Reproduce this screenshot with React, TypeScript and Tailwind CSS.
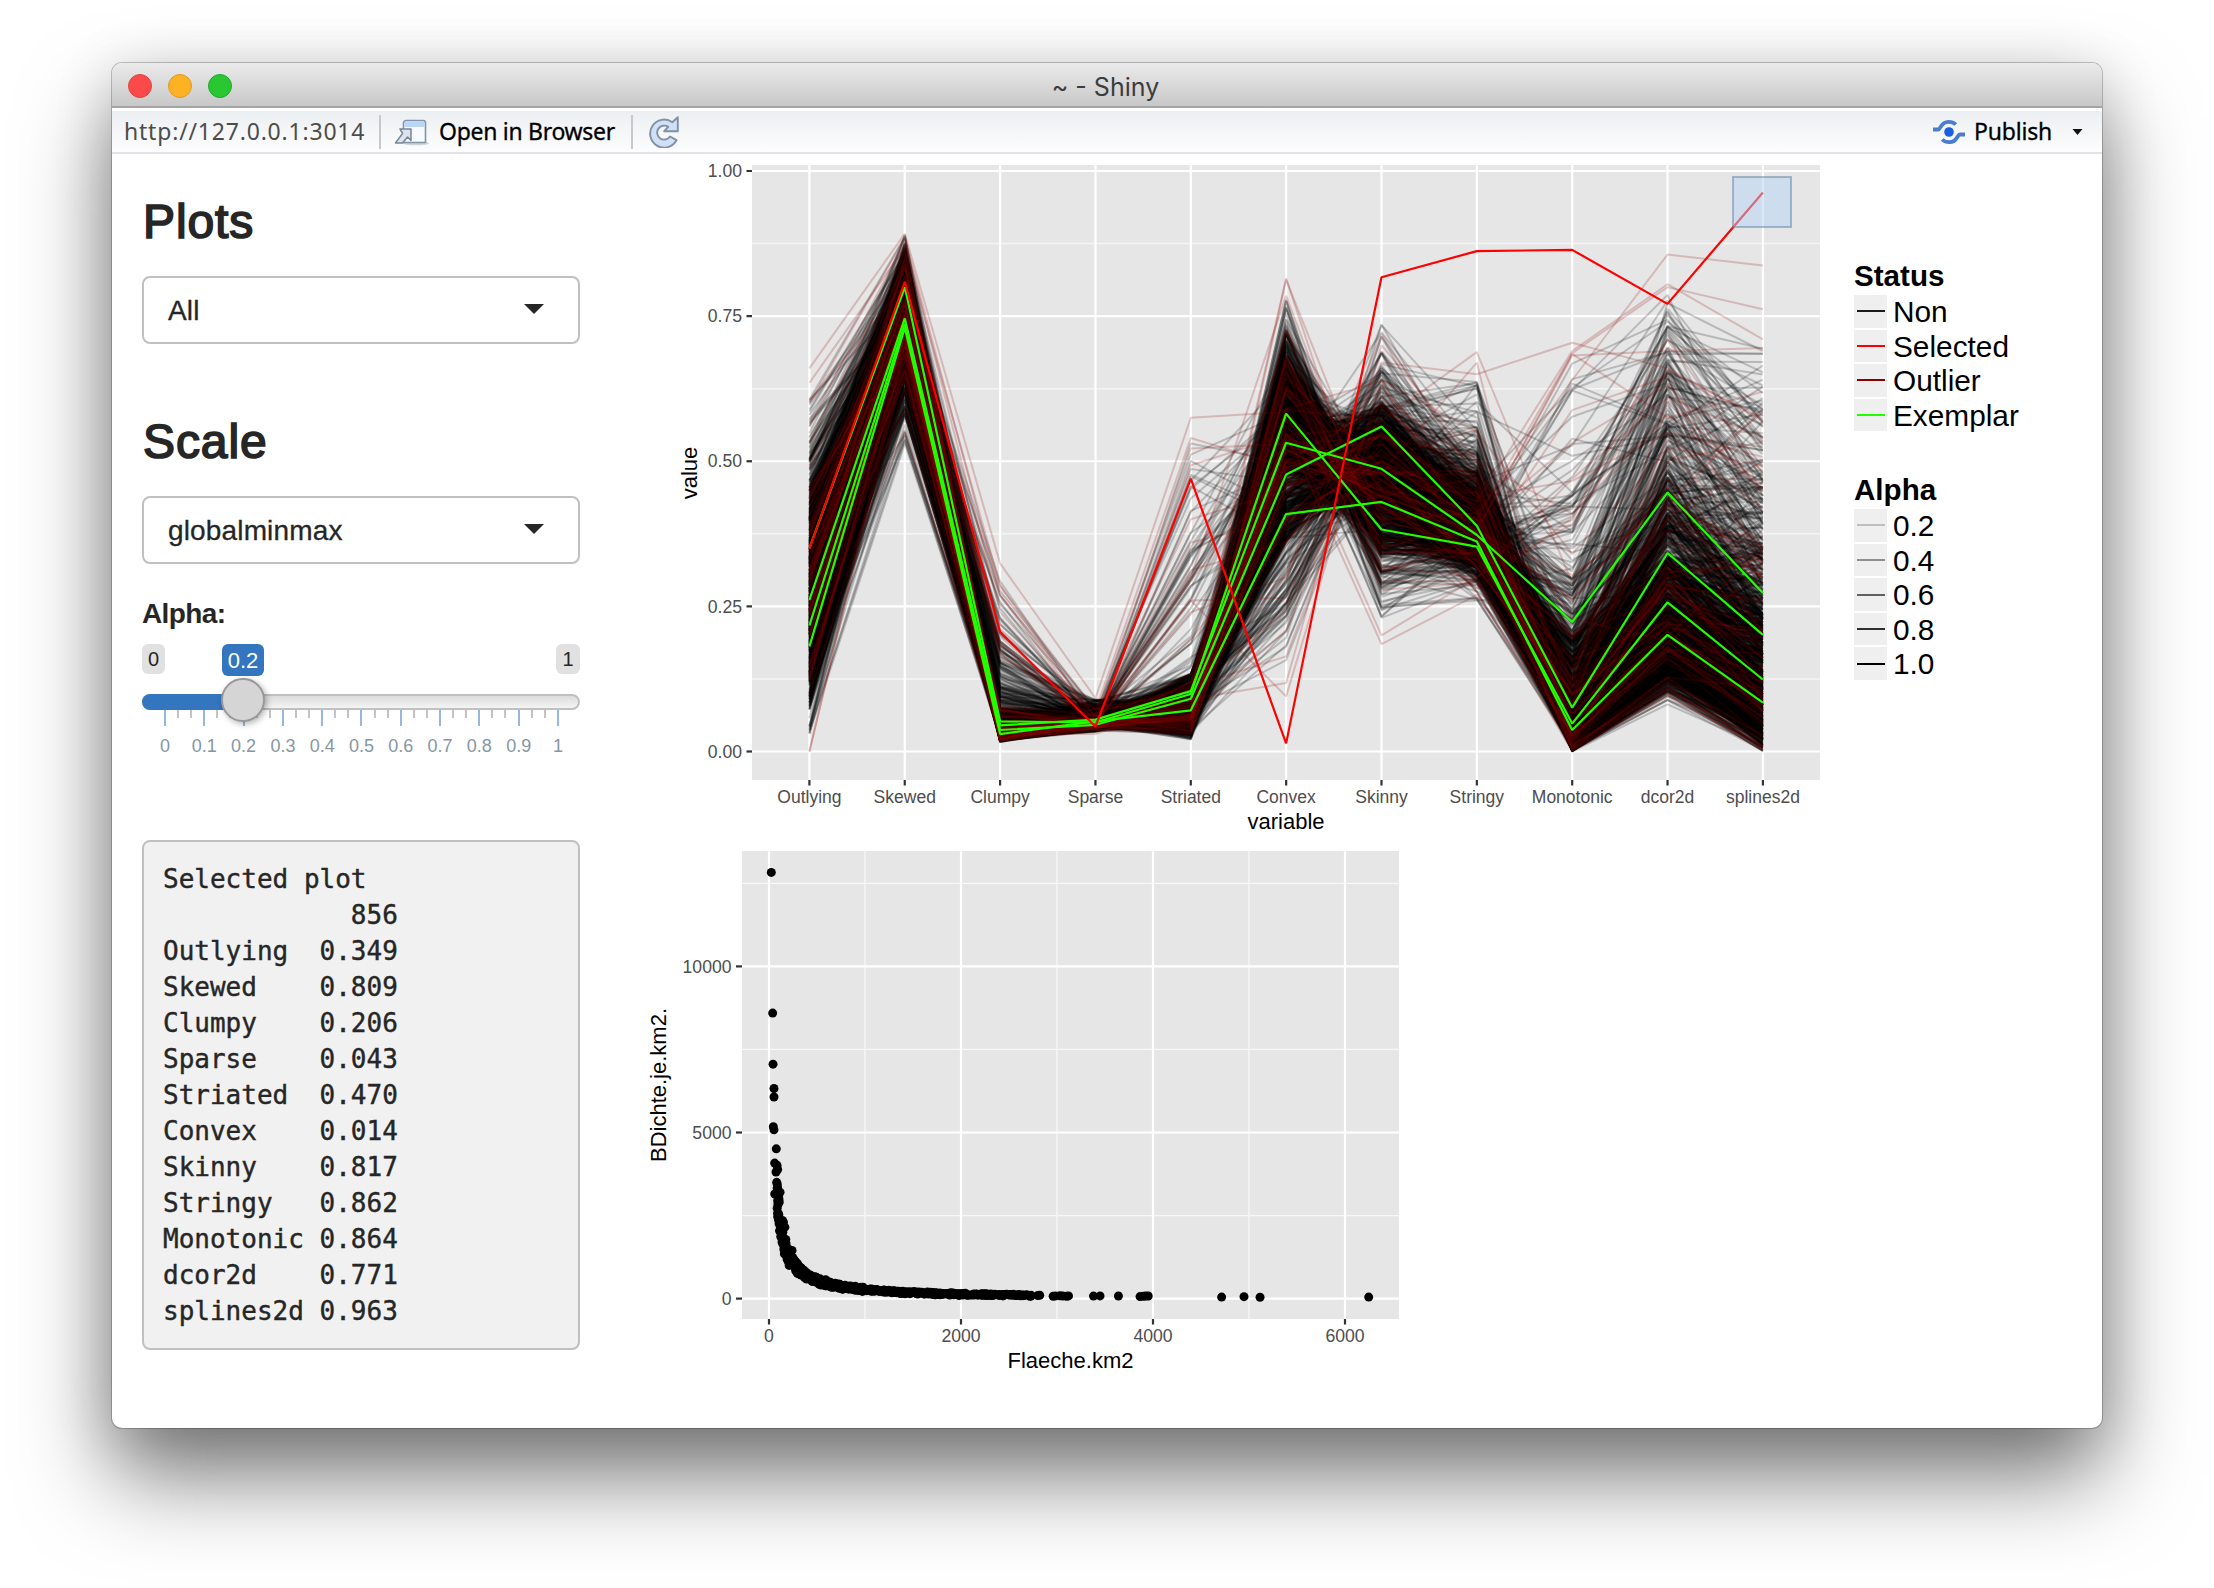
import React from "react";

/* ---------- deterministic sampling ---------- */

function makeRandom(seed: number) {
  let a = seed;
  return () => {
    a = (a + 0x6d2b79f5) | 0;
    let t = Math.imul(a ^ (a >>> 15), 1 | a);
    t = (t + Math.imul(t ^ (t >>> 7), 61 | t)) ^ t;
    return ((t ^ (t >>> 14)) >>> 0) / 4294967296;
  };
}

function normalCdf(z: number) {
  const t = 1 / (1 + 0.2316419 * Math.abs(z));
  const d = 0.3989423 * Math.exp((-z * z) / 2);
  const p = d * t * (0.3193815 + t * (-0.3565638 + t * (1.781478 + t * (-1.821256 + t * 1.330274))));
  return z > 0 ? 1 - p : p;
}

const VARIABLES = [
  "Outlying", "Skewed", "Clumpy", "Sparse", "Striated", "Convex",
  "Skinny", "Stringy", "Monotonic", "dcor2d", "splines2d",
];

const SELECTED = [0.349, 0.809, 0.206, 0.043, 0.47, 0.014, 0.817, 0.862, 0.864, 0.771, 0.963];

const EXEMPLARS = [
  [0.35, 0.8, 0.052, 0.05, 0.099, 0.582, 0.3825, 0.353, 0.048, 0.257, 0.124],
  [0.261, 0.746, 0.045, 0.055, 0.104, 0.532, 0.487, 0.373, 0.223, 0.446, 0.273],
  [0.217, 0.737, 0.037, 0.046, 0.091, 0.477, 0.56, 0.389, 0.0755, 0.342, 0.201],
  [0.181, 0.73, 0.03, 0.052, 0.071, 0.409, 0.43, 0.362, 0.037, 0.201, 0.084],
];

const PROBS = [0, 0.01, 0.05, 0.25, 0.5, 0.75, 0.9, 0.96, 0.99, 1];
const QUANTILES = [
  [0.03, 0.07, 0.12, 0.2, 0.27, 0.35, 0.42, 0.47, 0.53, 0.61],
  [0.53, 0.58, 0.64, 0.7, 0.74, 0.78, 0.82, 0.845, 0.87, 0.89],
  [0.016, 0.018, 0.02, 0.026, 0.034, 0.048, 0.075, 0.115, 0.19, 0.3],
  [0.034, 0.037, 0.04, 0.045, 0.05, 0.056, 0.066, 0.075, 0.083, 0.09],
  [0.02, 0.027, 0.035, 0.055, 0.075, 0.095, 0.115, 0.135, 0.36, 0.54],
  [0.15, 0.24, 0.36, 0.48, 0.54, 0.6, 0.65, 0.685, 0.73, 0.78],
  [0.22, 0.28, 0.34, 0.415, 0.465, 0.52, 0.57, 0.605, 0.66, 0.74],
  [0.26, 0.29, 0.315, 0.35, 0.38, 0.42, 0.455, 0.49, 0.56, 0.65],
  [0, 0.001, 0.003, 0.018, 0.05, 0.11, 0.2, 0.3, 0.48, 0.67],
  [0.08, 0.1, 0.12, 0.17, 0.24, 0.34, 0.47, 0.57, 0.7, 0.79],
  [0, 0.005, 0.02, 0.07, 0.14, 0.24, 0.36, 0.47, 0.6, 0.7],
];

function quantile(table: number[], p: number) {
  for (let i = 1; i < PROBS.length; i++) {
    if (p <= PROBS[i]) {
      const f = (p - PROBS[i - 1]) / (PROBS[i] - PROBS[i - 1]);
      return table[i - 1] + f * (table[i] - table[i - 1]);
    }
  }
  return table[table.length - 1];
}

function sampleProfiles(count: number, seed: number, spread: number) {
  const rnd = makeRandom(seed);
  const gauss = () => Math.sqrt(-2 * Math.log(rnd() + 1e-9)) * Math.cos(2 * Math.PI * rnd());
  const mix = (z: number, rho: number) => rho * z + Math.sqrt(1 - rho * rho) * gauss();
  const rows: number[][] = [];
  for (let i = 0; i < count; i++) {
    const z: number[] = [];
    z[0] = gauss();
    z[1] = mix(z[0], 0.55);
    z[2] = mix(z[1], 0.1);
    z[3] = mix(z[2], 0.3);
    z[4] = gauss();
    z[5] = gauss();
    z[6] = mix(z[5], -0.65);
    z[7] = mix(z[6], 0.5);
    z[8] = gauss();
    z[9] = mix(z[8], 0.85);
    z[10] = mix(z[9], 0.82);
    rows.push(z.map((v, j) => quantile(QUANTILES[j], normalCdf(v * spread))));
  }
  return rows;
}

const NON = sampleProfiles(1450, 41, 1);
const OUTLIERS = sampleProfiles(44, 977, 1.05).concat([
  [0.66, 0.892, 0.324, 0.092, 0.575, 0.585, 0.42, 0.37, 0.09, 0.3, 0.16],
  [0.635, 0.868, 0.285, 0.07, 0.54, 0.49, 0.51, 0.41, 0.02, 0.22, 0.07],
  [0.6, 0.885, 0.27, 0.06, 0.522, 0.53, 0.45, 0.4, 0.11, 0.38, 0.2],
  [0.56, 0.88, 0.24, 0.06, 0.4, 0.45, 0.55, 0.42, 0.05, 0.2, 0.1],
  [0.53, 0.86, 0.05, 0.05, 0.36, 0.4, 0.5, 0.4, 0.14, 0.4, 0.3],
  [0.49, 0.84, 0.06, 0.05, 0.26, 0.265, 0.6, 0.45, 0.01, 0.18, 0.05],
  [0, 0.68, 0.07, 0.05, 0.26, 0.095, 0.64, 0.55, 0.34, 0.52, 0.35],
  [0.0, 0.7, 0.03, 0.03, 0.09, 0.118, 0.7, 0.5, 0.41, 0.58, 0.46],
  [0.3, 0.75, 0.03, 0.04, 0.1, 0.815, 0.32, 0.3, 0.47, 0.61, 0.54],
  [0.27, 0.73, 0.04, 0.05, 0.08, 0.813, 0.4, 0.35, 0.2, 0.4, 0.35],
  [0.33, 0.77, 0.05, 0.05, 0.3, 0.785, 0.35, 0.33, 0.06, 0.25, 0.1],
  [0.28, 0.7, 0.04, 0.05, 0.24, 0.3, 0.67, 0.65, 0.704, 0.66, 0.57],
  [0.2, 0.73, 0.03, 0.05, 0.07, 0.4, 0.57, 0.688, 0.29, 0.47, 0.3],
  [0.22, 0.71, 0.03, 0.05, 0.06, 0.5, 0.48, 0.67, 0.02, 0.2, 0.08],
  [0.25, 0.75, 0.03, 0.05, 0.07, 0.55, 0.185, 0.27, 0.03, 0.16, 0.06],
  [0.26, 0.76, 0.04, 0.05, 0.06, 0.57, 0.2, 0.3, 0.05, 0.18, 0.07],
  [0.3, 0.78, 0.03, 0.05, 0.08, 0.5, 0.4, 0.41, 0.64, 0.856, 0.837],
  [0.29, 0.75, 0.04, 0.05, 0.07, 0.44, 0.5, 0.43, 0.69, 0.805, 0.71],
  [0.18, 0.72, 0.03, 0.05, 0.09, 0.5, 0.45, 0.4, 0.686, 0.8, 0.762],
  [0.2, 0.73, 0.03, 0.05, 0.09, 0.52, 0.44, 0.38, 0.682, 0.69, 0.695],
  [0.2, 0.73, 0.03, 0.05, 0.09, 0.52, 0.44, 0.38, 0.685, 0.575, 0.62],
]);

/* ---------- parallel coordinates chart ---------- */

const px = (i: number) => 149.4 + i * 95.35;
const py = (v: number) => 598.5 - v * 580.5;
const toPoints = (row: number[]) => row.map((v, i) => `${px(i).toFixed(1)},${py(v).toFixed(1)}`).join(" ");

function ParallelChart() {
  return (
    <svg width="1180" height="684" viewBox="0 0 1180 684" className="block shrink-0 font-['Liberation_Sans',Arial,sans-serif]">
      <rect x="92" y="12" width="1068" height="615" fill="#e6e6e6" />
      {[0.125, 0.375, 0.625, 0.875].map((v) => (
        <line key={v} x1="92" x2="1160" y1={py(v)} y2={py(v)} stroke="#f5f5f5" strokeWidth="1.4" />
      ))}
      {[0, 0.25, 0.5, 0.75, 1].map((v) => (
        <g key={v}>
          <line x1="92" x2="1160" y1={py(v)} y2={py(v)} stroke="#ffffff" strokeWidth="2.2" />
          <line x1="86.500" x2="92" y1={py(v)} y2={py(v)} stroke="#333333" strokeWidth="2.2" />
          <text x="82" y={py(v) + 6.2} textAnchor="end" fontSize="17.6" fill="#4d4d4d">{v.toFixed(2)}</text>
        </g>
      ))}
      {VARIABLES.map((name, i) => (
        <g key={name}>
          <line x1={px(i)} x2={px(i)} y1="12" y2="627" stroke="#ffffff" strokeWidth="2.2" />
          <line x1={px(i)} x2={px(i)} y1="627" y2="632.500" stroke="#333333" strokeWidth="2.2" />
          <text x={px(i)} y="649.500" textAnchor="middle" fontSize="17.5" fill="#4d4d4d">{name}</text>
        </g>
      ))}
      <g fill="none" strokeWidth="2" strokeLinejoin="bevel">
        {NON.map((row, i) => (
          <polyline key={i} points={toPoints(row)} stroke={i > 1200 && i % 9 === 0 ? "#8b0000" : "#000000"} strokeOpacity="0.2" />
        ))}
        {OUTLIERS.map((row, i) => (
          <polyline key={i} points={toPoints(row)} stroke="#8b0000" strokeOpacity="0.2" />
        ))}
        {EXEMPLARS.map((row, i) => (
          <polyline key={i} points={toPoints(row)} stroke="#1fff00" strokeWidth="2.200" />
        ))}
        <polyline points={toPoints(SELECTED)} stroke="#ff0000" strokeWidth="2.200" />
      </g>
      <rect x="1073" y="24" width="58" height="50" fill="#b4d4f5" fillOpacity="0.5" stroke="#5f7f9f" strokeOpacity="0.5" strokeWidth="2" />
      <text x="626" y="676" textAnchor="middle" fontSize="22" fill="#000000">variable</text>
      <text transform="translate(37 320) rotate(-90)" textAnchor="middle" fontSize="22" fill="#000000">value</text>
    </svg>
  );
}

/* ---------- scatter chart ---------- */

const SCATTER: [number, number][] = (() => {
  const pts: [number, number][] = [
    [24, 12830], [38, 8595], [42, 7057], [52, 6326], [52, 6068], [45, 5176], [52, 5080], [76, 4509],
    [59, 4079], [83, 4015], [90, 3886], [73, 3810], [80, 3500], [88, 3350], [60, 3150], [115, 3200],
    [95, 3050], [85, 2720], [240, 1450], [3380, 75], [3448, 82], [3640, 78], [3865, 60], [3900, 68],
    [3925, 75], [3950, 78], [4715, 45], [4948, 58], [5115, 40], [6247, 45],
    [2960, 70], [2985, 82], [3030, 85], [3060, 75], [3100, 70], [3120, 80],
    [900, 370], [980, 345], [720, 440], [590, 570], [530, 600], [430, 710], [2820, 100], [2800, 95],
    [150, 2300], [165, 2150], [140, 2350], [105, 2250], [112, 2050], [160, 1350], [210, 1000],
  ];
  const rnd = makeRandom(7);
  for (let i = 0; i < 440; i++) {
    const x = 85 * Math.pow(2780 / 85, Math.pow(rnd(), 0.8));
    pts.push([x, (268000 / x) * (0.84 + rnd() * 0.32) + (rnd() - 0.5) * 40]);
  }
  for (let x = 700; x < 2640; x += 24) {
    pts.push([x, 265000 / x + (rnd() - 0.5) * 50]);
  }
  return pts;
})();

const sx = (v: number) => 129 + v * 0.096;
const sy = (v: number) => 461.6 - v * 0.03322;

function ScatterChart() {
  return (
    <svg width="780" height="540" viewBox="0 0 780 540" className="block shrink-0 font-['Liberation_Sans',Arial,sans-serif]">
      <rect x="102" y="14" width="657" height="468" fill="#e6e6e6" />
      {[2500, 7500, 12500].map((v) => (
        <line key={v} x1="102" x2="759" y1={sy(v)} y2={sy(v)} stroke="#f8f8f8" strokeWidth="1.2" />
      ))}
      {[1000, 3000, 5000].map((v) => (
        <line key={v} x1={sx(v)} x2={sx(v)} y1="14" y2="482" stroke="#f5f5f5" strokeWidth="1.4" />
      ))}
      {[0, 5000, 10000].map((v) => (
        <g key={v}>
          <line x1="102" x2="759" y1={sy(v)} y2={sy(v)} stroke="#ffffff" strokeWidth="2.2" />
          <line x1="96" x2="102" y1={sy(v)} y2={sy(v)} stroke="#333333" strokeWidth="2.2" />
          <text x="91.500" y={sy(v) + 6.2} textAnchor="end" fontSize="17.6" fill="#4d4d4d">{v}</text>
        </g>
      ))}
      {[0, 2000, 4000, 6000].map((v) => (
        <g key={v}>
          <line x1={sx(v)} x2={sx(v)} y1="14" y2="482" stroke="#ffffff" strokeWidth="2.2" />
          <line x1={sx(v)} x2={sx(v)} y1="482" y2="487.500" stroke="#333333" strokeWidth="2.2" />
          <text x={sx(v)} y="505" textAnchor="middle" fontSize="17.6" fill="#4d4d4d">{v}</text>
        </g>
      ))}
      {SCATTER.map(([x, y], i) => (
        <circle key={i} cx={sx(x)} cy={sy(y)} r="4.5" fill="#000000" />
      ))}
      <text x="430.500" y="531" textAnchor="middle" fontSize="22" fill="#000000">Flaeche.km2</text>
      <text transform="translate(26 248) rotate(-90)" textAnchor="middle" fontSize="22" fill="#000000">BDichte.je.km2.</text>
    </svg>
  );
}

/* ---------- legend ---------- */

function Legend({ title, items }: { title: string; items: { label: string; color: string; opacity: number }[] }) {
  return (
    <div>
      <div className="h-[34px] text-[29.6px] leading-[34px] font-bold text-black">{title}</div>
      <div className="mt-[2px]">
        {items.map((it) => (
          <div key={it.label} className="flex h-[34.560px] items-start gap-[6px]">
            <div className="flex h-[32.5px] w-[33px] items-center justify-center bg-[#efefef]">
              <div className="h-[2px] w-[28px]" style={{ backgroundColor: it.color, opacity: it.opacity }} />
            </div>
            <div className="text-[29.8px] leading-[33.5px] text-black">{it.label}</div>
          </div>
        ))}
      </div>
    </div>
  );
}

/* ---------- icons ---------- */

function OpenBrowserIcon() {
  return (
    <svg width="36" height="30" viewBox="0 0 36 30" className="block">
      <ellipse cx="22" cy="26.500" rx="13" ry="1.800" fill="#9aa3ad" opacity="0.45" />
      <path d="M9.500 25.500V6.500Q9.500 3.500 12.500 3.500H29Q31.500 3.500 31.500 6V25.500Z" fill="#f7fafe" stroke="#8494a8" strokeWidth="1.600" />
      <path d="M10.300 10V6.500Q10.300 4.300 12.500 4.300H28.500Q30.700 4.300 30.700 6.500V10Z" fill="#b9d6f5" />
      <path d="M6 12H17V23.500L13.600 20L8.500 26H1.500L8.600 16.400Z" fill="#dde3eb" stroke="#76859a" strokeWidth="1.500" strokeLinejoin="round" />
    </svg>
  );
}

function RefreshIcon() {
  return (
    <svg width="32" height="32" viewBox="0 0 32 32" className="block">
      <path
        d="M24.300 6.200L29.800 1.200V15.200H16.200L20.200 10.900A7 7 0 1 0 22 20.500L28.500 24.200A14 14 0 1 1 24.300 6.200Z"
        fill="#d0e1f6"
        stroke="#8190a7"
        strokeWidth="1.900"
        strokeLinejoin="round"
      />
    </svg>
  );
}

function PublishIcon() {
  return (
    <svg width="34" height="26" viewBox="0 0 34 26" className="block">
      <circle cx="17" cy="13" r="4.800" fill="#1a5fe0" />
      <path d="M1 10.500H6C9 10.500 8.500 2.800 16.500 2.800Q21 2.800 23.800 5.500" fill="none" stroke="#4a7cd0" strokeWidth="3.800" />
      <path d="M33 15.500H28C25 15.500 25.500 23.200 17.500 23.200Q13 23.200 10.200 20.500" fill="none" stroke="#4a7cd0" strokeWidth="3.800" />
    </svg>
  );
}

/* ---------- sidebar ---------- */

function Heading({ children }: { children: React.ReactNode }) {
  return (
    <h3 className="h-[54px] pt-[1px] pl-[1px] text-[48px] leading-[54px] tracking-[0.9px] text-[#262626] [-webkit-text-stroke:1.7px_#262626]">{children}</h3>
  );
}

function Select({ value }: { value: string }) {
  return (
    <div className="flex h-[68px] w-full items-center justify-between rounded-[8px] border-2 border-[#c0c0c0] bg-white pr-[34px] pl-[24px] text-[28px] text-[#262626]">
      <span className="pt-[1px] tracking-[0.15px] [-webkit-text-stroke:0.3px_#262626]">{value}</span>
      <svg width="20" height="10" viewBox="0 0 20 10" className="mb-[3px] block">
        <path d="M0 0H20L10 10Z" fill="#262626" />
      </svg>
    </div>
  );
}

function AlphaSlider() {
  const ticks = Array.from({ length: 31 }, (_, i) => i);
  const labels = ["0", "0.1", "0.2", "0.3", "0.4", "0.5", "0.6", "0.7", "0.8", "0.9", "1"];
  return (
    <div className="relative w-full">
      <div className="flex h-[32px] items-start justify-between text-[20px] text-[#262626]">
        <span className="flex h-[30px] w-[23px] items-center justify-center rounded-[6px] bg-[#e1e1e1]">0</span>
        <span className="flex h-[30px] w-[24px] items-center justify-center rounded-[6px] bg-[#e1e1e1]">1</span>
      </div>
      <span className="absolute top-0 left-[80px] flex h-[32px] w-[42px] items-center justify-center rounded-[6px] bg-[#3475bf] text-[22px] text-white">0.2</span>
      <div className="mt-[18px] flex h-[16px] w-full items-center rounded-full border-2 border-[#c0c0c0] bg-gradient-to-b from-[#dcdcdc] to-[#f4f4f4]">
        <div className="-ml-[2px] h-[16px] w-[103px] shrink-0 rounded-l-full bg-[#3475bf]" />
      </div>
      <div className="ml-[22px] flex h-[16px] w-[395px] items-start justify-between">
        {ticks.map((i) => (
          <div key={i} className={i % 3 === 0 ? "h-[16px] w-[2px] bg-[#94b8e0]" : "h-[8px] w-[2px] bg-[#c4c4c4]"} />
        ))}
      </div>
      <div className="mt-[9px] ml-[23px] flex h-[22px] w-[393px] justify-between text-[18px] leading-[22px] text-[#8796a3]">
        {labels.map((l) => (
          <span key={l} className="flex w-0 justify-center">{l}</span>
        ))}
      </div>
      <div className="absolute top-[34px] left-[79px] size-[44px] rounded-full border-2 border-[#999999] bg-[#d5d5d5] shadow-[2px_2px_6px_rgba(0,0,0,0.3)]" />
    </div>
  );
}

function SelectedPlot() {
  const lines = ["Selected plot", "            856"].concat(
    VARIABLES.map((name, i) => name.padEnd(10, " ") + SELECTED[i].toFixed(3)),
  );
  return (
    <pre className="h-[510px] w-full rounded-[8px] border-2 border-[#c0c0c0] bg-[#f1f1f1] pt-[19px] pl-[19px] font-['DejaVu_Sans_Mono',monospace] text-[26px] leading-[36px] text-[#262626] [-webkit-text-stroke:0.4px_#262626]">
      {lines.join("\n")}
    </pre>
  );
}

/* ---------- window ---------- */

export default function App() {
  return (
    <div className="h-[1588px] w-[2214px] overflow-hidden bg-white pt-[63px] pl-[112px] font-['Liberation_Sans',Arial,sans-serif]">
      <div className="flex h-[1365px] w-[1990px] flex-col overflow-hidden rounded-[10px] bg-white shadow-[0_0_0_1px_rgba(0,0,0,0.22),0_50px_90px_rgba(0,0,0,0.5),0_10px_60px_rgba(0,0,0,0.16)]">
        <div className="grid h-[45px] shrink-0 grid-cols-3 items-center border-b-2 border-[#a5a5a5] bg-gradient-to-b from-[#ebebeb] to-[#c8c8c8] px-[16px]">
          <div className="flex gap-[16px] pt-[2px]">
            <span className="size-[24px] rounded-full border border-[#e0443e] bg-[#fc4a4a]" />
            <span className="size-[24px] rounded-full border border-[#dd9a1f] bg-[#fdb224]" />
            <span className="size-[24px] rounded-full border border-[#1fa928] bg-[#29c732]" />
          </div>
          <div className="pt-[4px] pr-[3px] text-center font-[Inter,sans-serif] text-[25px] leading-[30px] text-[#3c3c3c]">~ - Shiny</div>
        </div>
        <div className="flex h-[46px] shrink-0 items-center justify-between border-t-[3px] border-b-2 border-t-white border-b-[#e2e2e8] bg-gradient-to-b from-[#eceff2] to-[#fdfdfd] font-['Noto_Sans',sans-serif] text-[23px] text-black">
          <div className="flex h-full items-center">
            <span className="ml-[12px] w-[244px] tracking-[0.8px] whitespace-nowrap text-[#4c4c4c]">http://127.0.0.1:3014</span>
            <span className="ml-[11px] h-[34px] w-[2px] bg-[#c6c9cc]" />
            <span className="ml-[13px]"><OpenBrowserIcon /></span>
            <span className="ml-[9px] w-[180px] tracking-[-0.3px] whitespace-nowrap [-webkit-text-stroke:0.3px_#000]">Open in Browser</span>
            <span className="ml-[12px] h-[34px] w-[2px] bg-[#c6c9cc]" />
            <span className="ml-[15px]"><RefreshIcon /></span>
          </div>
          <div className="flex items-center pr-[19px]">
            <PublishIcon />
            <span className="ml-[8px] w-[80px] tracking-[-0.2px] whitespace-nowrap [-webkit-text-stroke:0.3px_#000]">Publish</span>
            <svg width="11" height="6" viewBox="0 0 10 6" className="ml-[18px] block">
              <path d="M0 0H10L5 6Z" fill="#111111" />
            </svg>
          </div>
        </div>
        <div className="flex flex-1">
          <div className="ml-[30px] w-[438px] shrink-0 pt-[40px]">
            <Heading>Plots</Heading>
            <div className="mt-[28px]"><Select value="All" /></div>
            <div className="mt-[70px]"><Heading>Scale</Heading></div>
            <div className="mt-[28px]"><Select value="globalminmax" /></div>
            <div className="mt-[34px] h-[32px] text-[28px] leading-[32px] font-bold tracking-[-0.6px] text-[#262626]">Alpha:</div>
            <div className="mt-[14px]"><AlphaSlider /></div>
            <div className="mt-[83px]"><SelectedPlot /></div>
          </div>
          <div className="-mt-px ml-[80px]">
            <div className="flex">
              <ParallelChart />
              <div className="ml-[14px] flex flex-col gap-[40px] pt-[106px]">
                <Legend
                  title="Status"
                  items={[
                    { label: "Non", color: "#1a1a1a", opacity: 1 },
                    { label: "Selected", color: "#ff0000", opacity: 1 },
                    { label: "Outlier", color: "#8b0000", opacity: 1 },
                    { label: "Exemplar", color: "#1fff00", opacity: 1 },
                  ]}
                />
                <Legend
                  title="Alpha"
                  items={[
                    { label: "0.2", color: "#000000", opacity: 0.2 },
                    { label: "0.4", color: "#000000", opacity: 0.4 },
                    { label: "0.6", color: "#000000", opacity: 0.6 },
                    { label: "0.8", color: "#000000", opacity: 0.8 },
                    { label: "1.0", color: "#000000", opacity: 1 },
                  ]}
                />
              </div>
            </div>
            <div className="-ml-[20px] flex">
              <ScatterChart />
            </div>
          </div>
        </div>
      </div>
    </div>
  );
}
